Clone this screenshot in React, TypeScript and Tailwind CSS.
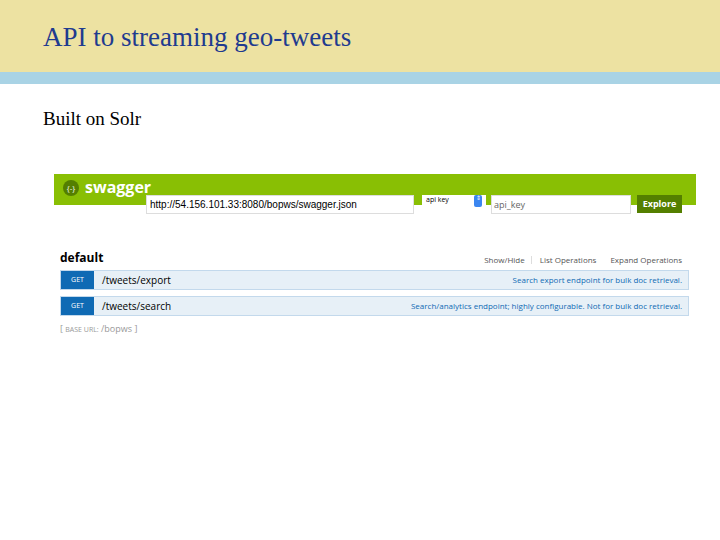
export default function App() {
  return (
    <div className="w-[720px] h-[540px] bg-white overflow-hidden" style={{ fontFamily: '"Liberation Serif", serif' }}>
      <div className="h-[72px] bg-[#ede2a2] pl-[43px] pt-[24px] text-[27px] text-[#1f3b8f] leading-none">API to streaming geo-tweets</div>
      <div className="h-[12px] bg-[#a9d3e5]" />
      <div className="pl-[43px] pt-[25px] text-[19px] text-black leading-none">Built on Solr</div>
      <div className="ml-[54px] mt-[46px] w-[642px]" style={{ fontFamily: '"Open Sans", sans-serif' }}>
        <div className="h-[31px] bg-[#89bf04] flex items-start pl-[9px] pt-[6px] gap-[6px]">
          <div className="w-[16px] h-[16px] rounded-full bg-[#547f00] text-white text-[8px] flex items-center justify-center">{"{-}"}</div>
          <span className="text-white font-bold text-[16px] leading-none -mt-[1px]">swagger</span>
        </div>
        <div className="-mt-[10px] flex items-start h-[20px]">
          <div className="ml-[92px] w-[268px] h-[19px] bg-white border border-[#ddd] text-[10px] text-black px-[3px] leading-[17px]" style={{ fontFamily: '"Liberation Sans", sans-serif' }}>http://54.156.101.33:8080/bopws/swagger.json</div>
          <div className="ml-[8px] w-[64px] h-[14px] bg-white text-[7px] px-[4px] flex justify-between items-start">
            <span>api key</span>
            <span className="w-[8px] h-[12px] bg-[#3b86f0] rounded-[2px] text-white text-[6px] leading-[6px] text-center">⇕</span>
          </div>
          <div className="ml-[5px] w-[140px] h-[19px] bg-white border border-[#ddd] text-[9px] text-[#666] px-[2px] leading-[17px]">api_key</div>
          <div className="ml-[6px] w-[45px] h-[18px] bg-[#547f00] text-white text-[9px] font-bold flex items-center justify-center">Explore</div>
        </div>
        <div className="mt-[37px] ml-[6px] mr-[7px]">
          <div className="flex items-end justify-between pb-[6px]">
            <span className="font-bold text-[12px] leading-none">default</span>
            <div className="flex text-[8px] text-[#555] leading-none">
              <span className="pr-[6px] border-r border-[#ddd]">Show/Hide</span>
              <span className="px-[8px]">List Operations</span>
              <span className="pl-[6px] pr-[7px]">Expand Operations</span>
            </div>
          </div>
          {[
            ["/tweets/export", "Search export endpoint for bulk doc retrieval."],
            ["/tweets/search", "Search/analytics endpoint; highly configurable. Not for bulk doc retrieval."],
          ].map(([p, d]) => (
            <div key={p} className="h-[20px] mb-[6px] flex items-center bg-[#e7f0f7] border border-[#c3d9ec]">
              <span className="w-[33px] h-full bg-[#0f6ab4] text-white text-[7px] flex items-center justify-center">GET</span>
              <span className="ml-[8px] text-[10px] text-black">{p}</span>
              <span className="ml-auto mr-[6px] text-[8px] text-[#0f6ab4]">{d}</span>
            </div>
          ))}
          <div className="text-[9px] text-[#999] mt-[4px]">[ <span className="text-[7px]">BASE URL:</span> /bopws ]</div>
        </div>
      </div>
    </div>
  );
}
